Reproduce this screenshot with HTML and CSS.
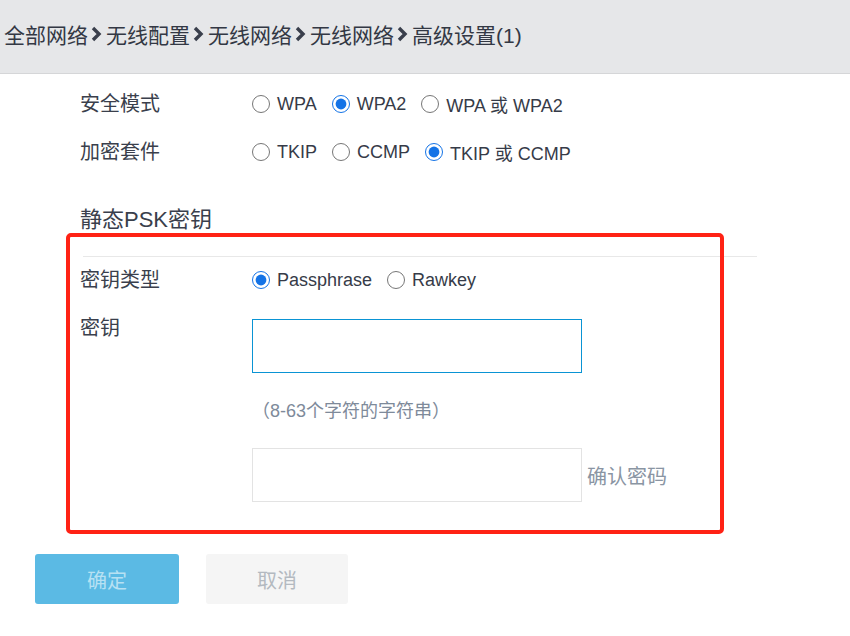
FILE: index.html
```html
<!DOCTYPE html>
<html>
<head>
	<meta charset="utf-8">
	<title>高级设置</title>
	<link rel="stylesheet" href="styles.css">
</head>
<body>
	<div class="crumbs">
		<span>全部网络</span>
		<svg class="sep" width="12" height="16" viewBox="0 0 12 16"><path d="M3 2 L9 8 L3 14" fill="none" stroke="#3a3f4c" stroke-width="3.4"/></svg>
		<span>无线配置</span>
		<svg class="sep" width="12" height="16" viewBox="0 0 12 16"><path d="M3 2 L9 8 L3 14" fill="none" stroke="#3a3f4c" stroke-width="3.4"/></svg>
		<span>无线网络</span>
		<svg class="sep" width="12" height="16" viewBox="0 0 12 16"><path d="M3 2 L9 8 L3 14" fill="none" stroke="#3a3f4c" stroke-width="3.4"/></svg>
		<span>无线网络</span>
		<svg class="sep" width="12" height="16" viewBox="0 0 12 16"><path d="M3 2 L9 8 L3 14" fill="none" stroke="#3a3f4c" stroke-width="3.4"/></svg>
		<span>高级设置(1)</span>
	</div>

	<div class="page">
		<div class="form">
			<div class="row">
				<div class="label">安全模式</div>
				<div class="options">
					<label class="opt"><input type="radio" name="mode"> WPA</label>
					<label class="opt"><input type="radio" name="mode" checked> WPA2</label>
					<label class="opt"><input type="radio" name="mode"> WPA 或 WPA2</label>
				</div>
			</div>
			<div class="row">
				<div class="label">加密套件</div>
				<div class="options">
					<label class="opt"><input type="radio" name="cipher"> TKIP</label>
					<label class="opt"><input type="radio" name="cipher"> CCMP</label>
					<label class="opt"><input type="radio" name="cipher" checked> TKIP 或 CCMP</label>
				</div>
			</div>

			<h2 class="section-title">静态PSK密钥</h2>
			<div class="divider"></div>

			<div class="row row-type">
				<div class="label">密钥类型</div>
				<div class="options">
					<label class="opt"><input type="radio" name="keytype" checked> Passphrase</label>
					<label class="opt"><input type="radio" name="keytype"> Rawkey</label>
				</div>
			</div>
			<div class="row row-key">
				<div class="label label-top">密钥</div>
				<div class="field">
					<input class="text-input active" type="password">
					<div class="hint">（8-63个字符的字符串）</div>
					<div class="confirm">
						<input class="text-input" type="password">
						<span class="confirm-label">确认密码</span>
					</div>
				</div>
			</div>
		</div>

		<div class="buttons">
			<button class="btn btn-ok">确定</button>
			<button class="btn btn-cancel">取消</button>
		</div>

		<div class="mark"></div>
	</div>
</body>
</html>
```

FILE: styles.css
```css
body {
	margin: 0;
	background: #fff;
	font-family: "Liberation Sans", "Noto Sans CJK SC", sans-serif;
	color: #3a3f4c;
}

.crumbs {
	box-sizing: border-box;
	height: 74px;
	padding: 0 0 5px 4px;
	border-bottom: 1px solid #d5d6d8;
	background: #e6e7e9;
	display: flex;
	align-items: center;
	font-size: 21px;
	color: #333844;
}

.crumbs .sep {
	margin: 0 4px 0 2px;
}

.page {
	position: relative;
}

.form {
	padding-left: 80px;
	padding-top: 6px;
}

.row {
	display: flex;
	align-items: center;
	height: 48px;
}

.label {
	width: 172px;
	font-size: 20px;
	line-height: 24px;
}

.options {
	display: flex;
	gap: 15px;
}

.opt {
	display: flex;
	align-items: center;
	font-size: 18px;
	color: #363b48;
}

.opt input {
	width: 18px;
	height: 18px;
	margin: 0 7px 0 0;
	accent-color: #1473e6;
}

.section-title {
	margin: 29px 0 0;
	font-size: 22px;
	font-weight: normal;
	line-height: 30px;
	color: #3a3f4c;
}

.divider {
	margin: 21px 0 0 3px;
	width: 674px;
	border-top: 1px solid #e8e8e8;
}

.row-type {
	height: 46px;
}

.row-key {
	height: auto;
	align-items: flex-start;
	margin-top: 16px;
}

.label-top {
	margin-top: -3px;
}

.text-input {
	box-sizing: border-box;
	width: 330px;
	height: 54px;
	margin: 0;
	border: 1px solid #e3e3e3;
	outline: none;
	display: block;
}

.text-input.active {
	border-color: #0a94d4;
}

.hint {
	margin-top: 26px;
	font-size: 18px;
	line-height: 24px;
	color: #7e8a9a;
}

.confirm {
	display: flex;
	align-items: center;
	gap: 5px;
	margin-top: 25px;
}

.confirm-label {
	font-size: 20px;
	color: #8a95a3;
}

.buttons {
	display: flex;
	gap: 27px;
	padding-left: 35px;
	margin-top: 52px;
}

.btn {
	width: 142px;
	height: 50px;
	border: none;
	border-radius: 3px;
	font-family: inherit;
	font-size: 20px;
}

.btn-ok {
	width: 144px;
	background: #5bbae4;
	color: #b7e1f3;
}

.btn-cancel {
	background: #f5f5f5;
	color: #b3b9c0;
}

.mark {
	position: absolute;
	left: 66px;
	top: 159px;
	width: 650px;
	height: 293px;
	border: 4px solid #ff2215;
	border-radius: 5px;
}
```
